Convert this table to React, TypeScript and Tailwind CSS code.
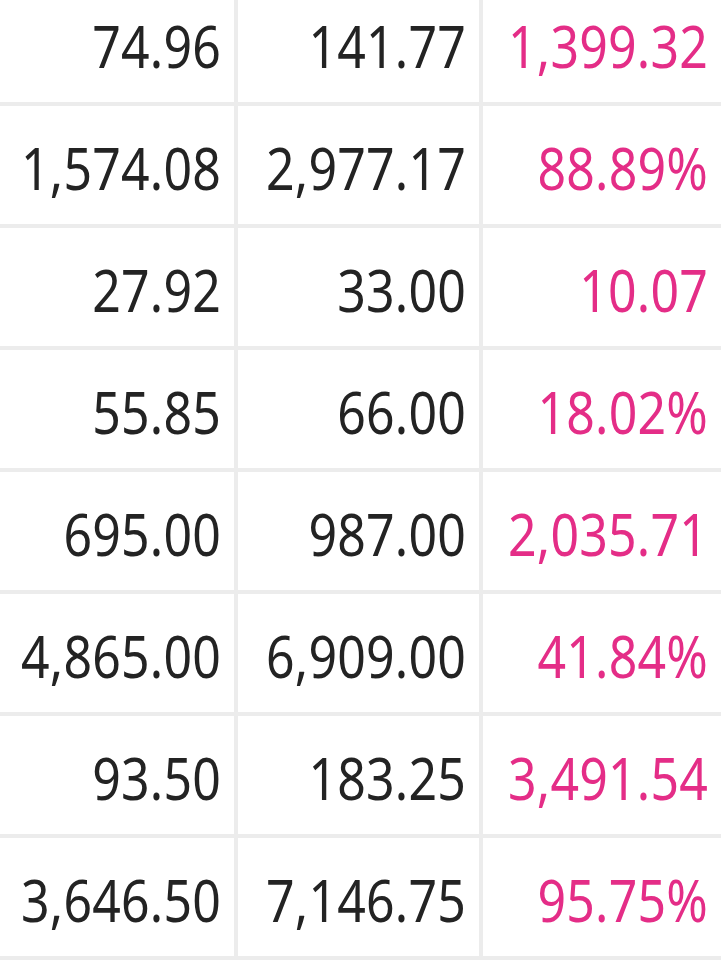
import React from "react";

const rows: [string, string, string][] = [
  ["74.96", "141.77", "1,399.32"],
  ["1,574.08", "2,977.17", "88.89%"],
  ["27.92", "33.00", "10.07"],
  ["55.85", "66.00", "18.02%"],
  ["695.00", "987.00", "2,035.71"],
  ["4,865.00", "6,909.00", "41.84%"],
  ["93.50", "183.25", "3,491.54"],
  ["3,646.50", "7,146.75", "95.75%"],
];

function Cell({ v, pink }: { v: string; pink?: boolean }) {
  return (
    <div className="bg-white h-[118px] flex items-center justify-end pr-[13px] pt-[6px]">
      <span
        className={
          "inline-block scale-y-[1.18] text-[50px] leading-none tracking-[0.2px] " +
          (pink ? "text-[#e42d87]" : "text-[#232323]")
        }
      >
        {v}
      </span>
    </div>
  );
}

export default function App() {
  return (
    <div
      className="w-[721px] h-[961px] overflow-hidden bg-white"
      style={{ fontFamily: '"Noto Sans", "Open Sans", sans-serif' }}
    >
      <div className="-mt-[16px] grid grid-cols-[234px_241px_1fr] gap-[4px] bg-[#ececec] pb-[4px]">
        {rows.map((r, i) => (
          <React.Fragment key={i}>
            <Cell v={r[0]} />
            <Cell v={r[1]} />
            <Cell v={r[2]} pink />
          </React.Fragment>
        ))}
      </div>
    </div>
  );
}
